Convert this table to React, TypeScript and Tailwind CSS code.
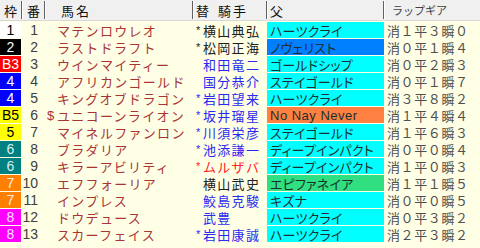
import React from "react";

type Row = {
  waku: string;
  wakuBg: string;
  wakuFg: string;
  ban: string;
  name: string;
  dollar?: boolean;
  star: boolean;
  jockey: string;
  jColor: string;
  sire: string;
  sireBg: string;
  lap: string;
};

const rows: Row[] = [
  { waku: "1", wakuBg: "bg-[#ffffff]", wakuFg: "text-[#000000]", ban: "1", name: "マテンロウレオ", star: true, jockey: "横山典弘", jColor: "text-[#202020]", sire: "ハーツクライ", sireBg: "bg-[#00ffff]", lap: "消１平３瞬０" },
  { waku: "2", wakuBg: "bg-[#000000]", wakuFg: "text-[#ffffff]", ban: "2", name: "ラストドラフト", star: true, jockey: "松岡正海", jColor: "text-[#202020]", sire: "ノヴェリスト", sireBg: "bg-[#0080ff]", lap: "消０平１瞬４" },
  { waku: "B3", wakuBg: "bg-[#ff0000]", wakuFg: "text-[#ffffff]", ban: "3", name: "ウインマイティー", star: false, jockey: "和田竜二", jColor: "text-[#2a2af0]", sire: "ゴールドシップ", sireBg: "bg-[#00ffff]", lap: "消０平２瞬３" },
  { waku: "4", wakuBg: "bg-[#0000ff]", wakuFg: "text-[#ffffff]", ban: "4", name: "アフリカンゴールド", star: false, jockey: "国分恭介", jColor: "text-[#2a2af0]", sire: "ステイゴールド", sireBg: "bg-[#00ffff]", lap: "消０平１瞬７" },
  { waku: "4", wakuBg: "bg-[#0000ff]", wakuFg: "text-[#ffffff]", ban: "5", name: "キングオブドラゴン", star: true, jockey: "岩田望来", jColor: "text-[#2a2af0]", sire: "ハーツクライ", sireBg: "bg-[#00ffff]", lap: "消３平８瞬２" },
  { waku: "B5", wakuBg: "bg-[#ffff00]", wakuFg: "text-[#000000]", ban: "6", name: "ユニコーンライオン", dollar: true, star: true, jockey: "坂井瑠星", jColor: "text-[#2a2af0]", sire: "No Nay Never", sireBg: "bg-[#ff8040]", lap: "消１平４瞬４" },
  { waku: "5", wakuBg: "bg-[#ffff00]", wakuFg: "text-[#000000]", ban: "7", name: "マイネルファンロン", star: true, jockey: "川須栄彦", jColor: "text-[#2a2af0]", sire: "ステイゴールド", sireBg: "bg-[#00ffff]", lap: "消１平６瞬３" },
  { waku: "6", wakuBg: "bg-[#008080]", wakuFg: "text-[#d8f0f0]", ban: "8", name: "ブラダリア", star: true, jockey: "池添謙一", jColor: "text-[#2a2af0]", sire: "ディープインパクト", sireBg: "bg-[#00ffff]", lap: "消０平０瞬４" },
  { waku: "6", wakuBg: "bg-[#008080]", wakuFg: "text-[#d8f0f0]", ban: "9", name: "キラーアビリティ", star: true, jockey: "ムルザバ", jColor: "text-[#ff2020]", sire: "ディープインパクト", sireBg: "bg-[#00ffff]", lap: "消１平０瞬３" },
  { waku: "7", wakuBg: "bg-[#ff8000]", wakuFg: "text-[#fff0e0]", ban: "10", name: "エフフォーリア", star: false, jockey: "横山武史", jColor: "text-[#202020]", sire: "エピファネイア", sireBg: "bg-[#30e080]", lap: "消１平１瞬５" },
  { waku: "7", wakuBg: "bg-[#ff8000]", wakuFg: "text-[#fff0e0]", ban: "11", name: "インプレス", star: false, jockey: "鮫島克駿", jColor: "text-[#2a2af0]", sire: "キズナ", sireBg: "bg-[#00ffff]", lap: "消０平０瞬５" },
  { waku: "8", wakuBg: "bg-[#ff00ff]", wakuFg: "text-[#ffe0ff]", ban: "12", name: "ドウデュース", star: false, jockey: "武豊", jColor: "text-[#2a2af0]", sire: "ハーツクライ", sireBg: "bg-[#00ffff]", lap: "消０平３瞬２" },
  { waku: "8", wakuBg: "bg-[#ff00ff]", wakuFg: "text-[#ffe0ff]", ban: "13", name: "スカーフェイス", star: true, jockey: "岩田康誠", jColor: "text-[#2a2af0]", sire: "ハーツクライ", sireBg: "bg-[#00ffff]", lap: "消２平３瞬２" },
];

const jp = "font-['Noto_Sans_CJK_JP','Noto_Sans',sans-serif]";

function Sep() {
  return <div className="h-[18px] w-[2px] border-l border-[#606060] border-r border-r-[#ffffff]" />;
}

export default function App() {
  return (
    <div className={`w-[480px] h-[248px] bg-[#ffffe6] overflow-hidden ${jp}`}>
      {/* header */}
      <div className="h-[21px] flex items-center bg-[#f0f0f0] border-b border-[#d8d8d8] text-[13px] text-[#101010] leading-none whitespace-nowrap">
        <div className="w-[21px] flex justify-center">枠</div>
        <Sep />
        <div className="w-[21px] flex justify-center">番</div>
        <Sep />
        <div className="w-[146px] pl-[15px] tracking-[2px]">馬名</div>
        <Sep />
        <div className="w-[72px] pl-[2px] flex">
          <span className="w-[22px]">替</span>
          <span className="tracking-[2px]">騎手</span>
        </div>
        <Sep />
        <div className="w-[115px] pl-[2px]">父</div>
        <Sep />
        <div className="flex-1 pl-[7px] text-[11px] text-[#404040]">ラップギア</div>
      </div>
      <div className="flex flex-col gap-px pt-px">
        {rows.map((r, i) => (
          <div key={i} className="h-[16px] flex items-stretch text-[13px] leading-none whitespace-nowrap">
            <div className={`w-[21px] flex items-center justify-center font-['Liberation_Sans',sans-serif] text-[14px] ${r.wakuBg} ${r.wakuFg}`}>
              {r.waku}
            </div>
            <div className="w-[17px] flex items-center justify-end font-['Liberation_Sans',sans-serif] text-[14px] text-[#404040]">
              {r.ban}
            </div>
            <div className="w-[155px] flex items-center pl-[9px] text-[#a83434] tracking-[1.3px] overflow-hidden">
              <span className="w-[10px] shrink-0 font-['Liberation_Sans',sans-serif] text-[13px]">{r.dollar ? "$" : ""}</span>
              <span>{r.name}</span>
            </div>
            <div className={`w-[74px] flex items-center ${r.jColor} tracking-[1.3px] overflow-hidden`}>
              <span className="w-[10px] shrink-0 text-[11px] font-['Liberation_Sans',sans-serif] pl-[3px]">{r.star ? "*" : ""}</span>
              <span>{r.jockey}</span>
            </div>
            <div className={`w-[117px] flex items-center pl-[3px] overflow-hidden ${r.sireBg} text-[#1a3030] [font-feature-settings:'palt'] ${r.sire === "No Nay Never" ? "font-['Liberation_Sans',sans-serif] text-[13px] tracking-[0.5px]" : "tracking-[0.2px]"}`}>
              {r.sire}
            </div>
            <div className="flex-1 flex items-center pl-[3px] text-[#505050] tracking-[0.6px]">
              {r.lap}
            </div>
          </div>
        ))}
      </div>
    </div>
  );
}
